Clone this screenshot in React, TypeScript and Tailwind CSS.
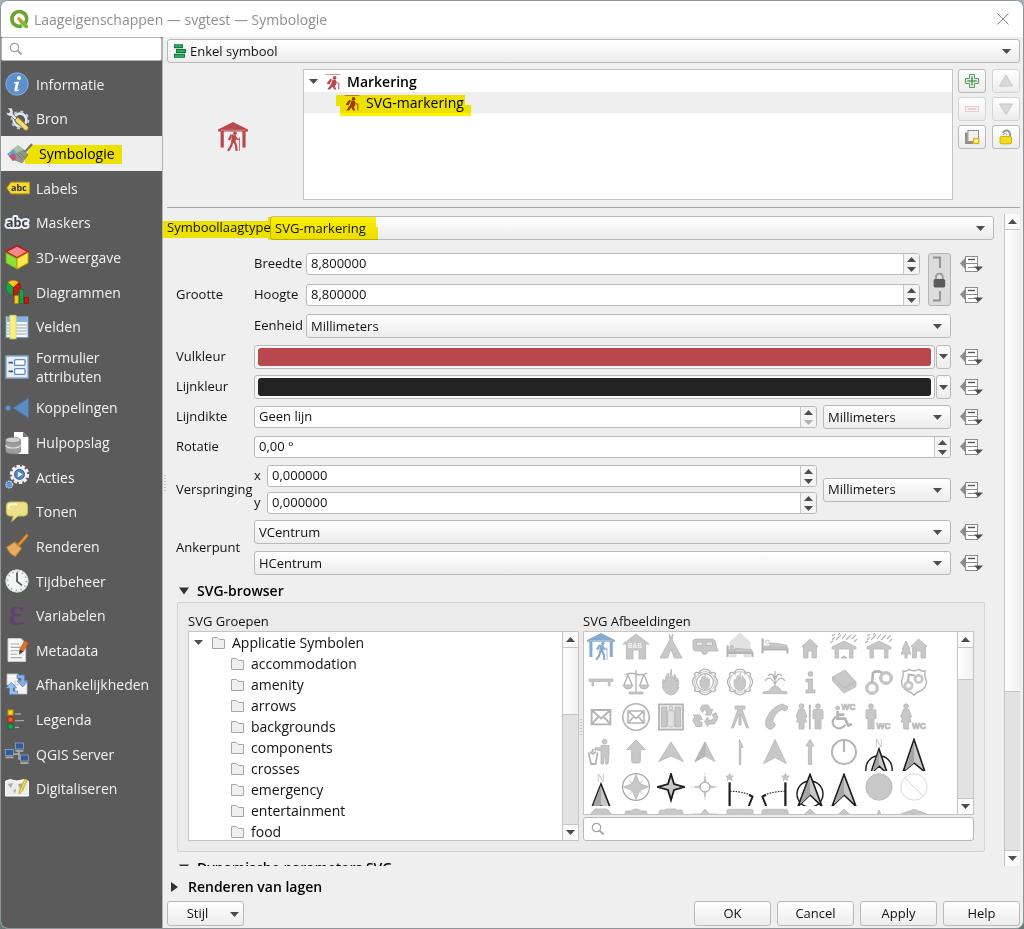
import type { ReactNode } from 'react';
import clsx from 'clsx';

const FILL = '#c8c8c8';
const LINE = '#b4b4b4';

/* ---------- shared bits ---------- */

function Arrow({ up = false, faded = false, className = '' }: { up?: boolean; faded?: boolean; className?: string }) {
  return (
    <svg viewBox="0 0 9 5" className={clsx('w-[9px] h-[5px] shrink-0', className)} aria-hidden="true">
      <path d={up ? 'M0 5L4.5 0L9 5Z' : 'M0 0H9L4.5 5Z'} fill={faded ? '#b0b0b0' : '#4d4d4d'} />
    </svg>
  );
}

function Search() {
  return (
    <svg viewBox="0 0 14 14" className="w-[14px] h-[14px]" fill="none" stroke="#a4a4a4" aria-hidden="true">
      <circle cx="5.5" cy="5.5" r="4.2" strokeWidth="1.2" />
      <path d="M8.6 8.6L12.5 12.5" strokeWidth="1.8" />
    </svg>
  );
}

function Grip({ className }: { className: string }) {
  return (
    <svg viewBox="0 0 2 16" className={clsx('w-[2px] h-4 pointer-events-none', className)} aria-hidden="true">
      <path d="M1 0V16" stroke="#c2c2c2" strokeWidth="2" strokeDasharray="1 2" />
    </svg>
  );
}

const boxed = 'border border-[#b9b9b9] rounded-[3px]';
const raised = 'bg-linear-to-b from-white to-[#ececec]';

function Select({ id, label, options, className = '', indent = 'pl-1' }: {
  id: string;
  label?: string;
  options: string[];
  className?: string;
  indent?: string;
}) {
  return (
    <div className={clsx('relative h-6', className)}>
      <select id={id} aria-label={label} className={clsx('block w-full h-full pt-px appearance-none outline-none', boxed, raised, indent)}>
        {options.map((o) => (
          <option key={o}>{o}</option>
        ))}
      </select>
      <Arrow className="absolute right-[9px] top-[10px] pointer-events-none" />
    </div>
  );
}

function Spin({ id, label, value, className = '', min = false }: {
  id: string;
  label?: string;
  value: string;
  className?: string;
  min?: boolean;
}) {
  return (
    <div className={clsx('flex h-[22px] bg-white overflow-hidden', boxed, className)}>
      <input id={id} aria-label={label} defaultValue={value} className="flex-1 min-w-0 px-1 outline-none bg-transparent" />
      <div className="w-4 shrink-0 border-l border-[#c6c6c6] bg-[#f4f4f4] flex flex-col">
        <button aria-label="Omhoog" className="flex-1 flex items-center justify-center"><Arrow up /></button>
        <button aria-label="Omlaag" className="flex-1 flex items-center justify-center"><Arrow faded={min} /></button>
      </div>
    </div>
  );
}

function Override() {
  return (
    <button aria-label="Data-gedefinieerde override" className="w-[24px] h-[18px] shrink-0">
      <svg viewBox="0 0 24 18" className="w-[24px] h-[18px]">
        <path d="M0 8.5L5 3V14Z" fill="#8c8c8c" />
        <rect x="5.5" y="1.5" width="12" height="15" fill="#fff" stroke="#8c8c8c" />
        <path d="M5 8.5H18M8 12.5H15" stroke="#8c8c8c" />
        <path d="M8 4.5H15" stroke="#555" strokeWidth="1.4" />
        <path d="M14 11.6H23L18.5 16Z" fill="#4d4d4d" />
      </svg>
    </button>
  );
}

function Scrollbar({ thumb }: { thumb: string }) {
  return (
    <div className="w-4 shrink-0 flex flex-col border-l border-[#c4c4c4] bg-[#e2e2e2]">
      <button aria-label="Omhoog schuiven" className="h-4 shrink-0 bg-[#fafafa] border-b border-[#c4c4c4] flex items-center justify-center"><Arrow up /></button>
      <div className={clsx('bg-linear-to-r from-white to-[#f0f0f0] border-b border-[#c4c4c4]', thumb)} />
      <div className="flex-1" />
      <button aria-label="Omlaag schuiven" className="h-4 shrink-0 bg-[#fafafa] border-t border-[#c4c4c4] flex items-center justify-center"><Arrow /></button>
    </div>
  );
}

function Hiker({ color }: { color: string }) {
  return (
    <g fill={color} stroke={color}>
      <circle cx="17" cy="11.2" r="1.8" stroke="none" />
      <path d="M14 12.8L17.4 13.4L18 17.5L15.8 20.4L13.6 19.8Z" strokeWidth="0.6" />
      <path d="M12.8 12L9.8 17.4L12.2 18.4L14 13Z" stroke="none" />
      <path d="M14.8 19L13 24.2L10 28.8M16.2 19L18 23.4L18.6 28.8" fill="none" strokeWidth="2.2" />
      <path d="M17 14L19 17L21.4 17.6" fill="none" strokeWidth="1.4" />
      <path d="M21.4 15.5V28.8" fill="none" strokeWidth="0.8" />
    </g>
  );
}

function Shelter({ color, className }: { color: string; className: string }) {
  return (
    <svg viewBox="0 0 30 30" className={className} aria-hidden="true">
      <path d="M0 7.4L15 0L30 7.4V9.4H27.6V25.6H24.4V9.4H5.8V25.6H2.6V9.4H0Z" fill={color} />
      <path d="M3 8.2H27" stroke="#fff" strokeWidth="0.7" opacity="0.5" />
      <Hiker color={color} />
    </svg>
  );
}

function TinyHiker({ color }: { color: string }) {
  return (
    <svg viewBox="0 0 16 16" className="w-4 h-4 shrink-0" aria-hidden="true">
      <path d="M0.6 0.6H15.4" stroke={color} strokeWidth="0.8" opacity="0.8" />
      <circle cx="9.6" cy="3.8" r="1.9" fill={color} />
      <path d="M7.4 5.4L11 6.2L11.4 10.4L9.8 12L11.4 15.6H9L7.6 12.6L4.8 15.6H2.2L6.2 10Z" fill={color} />
      <path d="M5.2 4.8L1.6 9.4L4.4 10.6L7 5.8Z" fill={color} />
      <path d="M10.6 7.2L13 9.4M13.8 8.6V15.4" stroke={color} fill="none" />
    </svg>
  );
}

/* ---------- sidebar ---------- */

const pages: { name: string; icon: ReactNode }[] = [
  {
    name: 'Informatie',
    icon: (
      <>
        <circle cx="12" cy="12" r="11.2" fill="#5d8fcf" stroke="#86b0e2" />
        <circle cx="14" cy="6" r="2" fill="#fff" />
        <path d="M9 10.2L14.2 9.4L12.2 17.2Q12.2 18.4 14.4 17L14 18.6Q9 21 9.4 17.6L10.8 11.4H9Z" fill="#fff" />
      </>
    ),
  },
  {
    name: 'Bron',
    icon: (
      <>
        <circle cx="15" cy="13" r="6.4" fill="none" stroke="#dfe6ee" strokeWidth="2.6" />
        <circle cx="15" cy="13" r="8.4" fill="none" stroke="#b7cbe2" strokeWidth="2" strokeDasharray="3 3.6" />
        <path d="M12 12.6L21 21" stroke="#8f7617" strokeWidth="5.6" strokeLinecap="round" />
        <path d="M12.4 13L21 21" stroke="#f2dc7a" strokeWidth="3.8" strokeLinecap="round" />
        <path d="M2 1L7 1Q9 4 8 7L12 11L10 13L6 9Q2 10 1 5L4 6L5 4Z" fill="#e8e8e8" stroke="#444" strokeWidth="0.6" />
      </>
    ),
  },
  {
    name: 'Symbologie',
    icon: (
      <>
        <path d="M5 9L13 3L21 9L12 15Z" fill="#a3c7a0" />
        <path d="M2 12L9 7L13 14L8 19Z" fill="#6aa2cf" />
        <path d="M4 14L9 11L11 18L8 19Z" fill="#c8526c" />
        <path d="M11 12L19 8L23 13L17 21L10 18Z" fill="#96968a" stroke="#79756a" strokeWidth="0.6" />
        <path d="M13 13L18 18M15 11L20 16" stroke="#6f7f80" />
        <path d="M20 10L27 2" stroke="#777" strokeWidth="2.2" />
      </>
    ),
  },
  {
    name: 'Labels',
    icon: (
      <>
        <path d="M1.8 12L6 6.2H24.4V17.8H6Z" fill="#f4d73a" stroke="#c9a400" />
        <text x="6" y="15.4" fontSize="9" fontWeight="700" fontFamily="Noto Sans" fill="#333">abc</text>
      </>
    ),
  },
  {
    name: 'Maskers',
    icon: (
      <text x="1" y="16" fontSize="12.5" fontWeight="700" fontFamily="Noto Sans" fill="#3d3d44" stroke="#eef1fb" strokeWidth="4" strokeLinejoin="round" paintOrder="stroke">abc</text>
    ),
  },
  {
    name: '3D-weergave',
    icon: (
      <>
        <path d="M12 0.8L23 6.6L12 13L1 6.6Z" fill="#f28a8a" stroke="#c4141c" strokeWidth="1.6" />
        <path d="M1 7.6L12 13.6V24L1 18Z" fill="#8fe03a" stroke="#5ba61c" />
        <path d="M23 7.6L12 13.6V24L23 18Z" fill="#f8e64a" stroke="#c6a800" />
      </>
    ),
  },
  {
    name: 'Diagrammen',
    icon: (
      <>
        <path d="M8.4 7.6L2.6 2.6Q8 -2 14 2.6Z" fill="#fbc520" stroke="#a87c00" strokeWidth="0.6" />
        <path d="M8.4 7.6L2.6 2.6Q-1.6 8 3.4 13L8.4 15.4Z" fill="#1da14c" stroke="#0b6d2c" strokeWidth="0.6" />
        <path d="M8.4 7.6L14 2.6Q18 9 13 13.4L8.4 15.4Z" fill="#c61a12" stroke="#7d0d08" strokeWidth="0.6" />
        <rect x="9.6" y="15.6" width="4" height="8" fill="#fbc520" stroke="#a87c00" strokeWidth="0.6" />
        <rect x="14.4" y="9.6" width="4" height="14" fill="#1da14c" stroke="#0b6d2c" strokeWidth="0.6" />
        <rect x="19.2" y="17.6" width="4" height="6" fill="#c61a12" stroke="#7d0d08" strokeWidth="0.6" />
      </>
    ),
  },
  {
    name: 'Velden',
    icon: (
      <>
        <rect x="1" y="1.6" width="22" height="21" fill="#f3f7fb" stroke="#6f9ac8" />
        <rect x="1.6" y="2" width="21" height="5" fill="#8cb2dc" />
        <path d="M2 10H22M2 13H22M2 16H22M2 19H22" stroke="#9aa6b4" strokeWidth="1.2" />
        <rect x="5" y="0.4" width="6" height="23.4" fill="#f6f08a" stroke="#e0d860" />
      </>
    ),
  },
  {
    name: 'Formulier\nattributen',
    icon: (
      <>
        <rect x="1" y="1" width="22" height="22" fill="#e6edf4" stroke="#86a6cc" strokeWidth="1.4" />
        <path d="M3.6 7.6H8M3.6 16.4H8" stroke="#4b5566" strokeWidth="1.6" />
        <rect x="9.6" y="4.6" width="10.4" height="5.8" rx="1" fill="#fff" stroke="#5d8cc4" strokeWidth="1.3" />
        <rect x="9.6" y="13.6" width="10.4" height="5.8" rx="1" fill="#fff" stroke="#5d8cc4" strokeWidth="1.3" />
      </>
    ),
  },
  {
    name: 'Koppelingen',
    icon: (
      <>
        <circle cx="3" cy="12" r="2.6" fill="#5f8fc6" />
        <path d="M8 12L23.6 2V22Z" fill="#5b8cc4" stroke="#456f9f" strokeWidth="0.6" />
      </>
    ),
  },
  {
    name: 'Hulpopslag',
    icon: (
      <>
        <path d="M9 1H18L23.4 6V23H9Z" fill="#fff" />
        <path d="M18 1V6H23.4Z" fill="#777" />
        <path d="M0.6 9V20Q1 23 8 23T15.6 20V9Z" fill="#9d9d9d" stroke="#6f6f6f" strokeWidth="0.6" />
        <ellipse cx="8.1" cy="9" rx="7.5" ry="2.8" fill="#cfcfcf" stroke="#6f6f6f" strokeWidth="0.6" />
        <path d="M0.6 14.4Q2 17 8 17T15.6 14.4" fill="none" stroke="#e0e0e0" strokeWidth="1.2" />
      </>
    ),
  },
  {
    name: 'Acties',
    icon: (
      <>
        <circle cx="14.5" cy="9.4" r="8.4" fill="none" stroke="#f0f0f0" strokeWidth="2.6" strokeDasharray="3.4 1.8" />
        <circle cx="14.5" cy="9.4" r="7.8" fill="#f0f0f0" />
        <circle cx="14.5" cy="9.4" r="5" fill="#4d86c4" stroke="#34659c" />
        <path d="M12.8 6.6L17.8 9.4L12.8 12.2Z" fill="#fff" />
        <circle cx="4.2" cy="19.6" r="3.4" fill="#5f93cf" stroke="#c4d4e6" strokeWidth="1.2" strokeDasharray="1.6 0.8" />
      </>
    ),
  },
  {
    name: 'Tonen',
    icon: (
      <>
        <path d="M5 2H19Q22.6 2 22.6 6V12Q22.6 16 19 16H13L6.6 21.6L8.4 16H5Q1.4 16 1.4 12V6Q1.4 2 5 2Z" fill="#ece08a" stroke="#cbbd4f" />
        <path d="M3.6 9V6.6Q3.6 4.4 6 4.4H12" stroke="#fdfbe4" strokeWidth="1.6" fill="none" />
      </>
    ),
  },
  {
    name: 'Renderen',
    icon: (
      <>
        <path d="M14 10.6L21.8 1.6" stroke="#b06f16" strokeWidth="3.4" strokeLinecap="round" />
        <path d="M14 10.6L21.8 1.6" stroke="#e8962e" strokeWidth="2" strokeLinecap="round" />
        <path d="M9.6 8L16.6 14.6L10.4 22.6Q4 20 1.6 13.2Z" fill="#e6ab62" stroke="#b5782b" />
        <path d="M10 8L16.4 14" stroke="#b5782b" strokeWidth="1.6" />
      </>
    ),
  },
  {
    name: 'Tijdbeheer',
    icon: (
      <>
        <circle cx="12" cy="12" r="11.2" fill="#f5f5f3" stroke="#d6d6d6" />
        <circle cx="12" cy="12" r="9.4" fill="none" stroke="#7fa3cc" strokeWidth="1.6" strokeDasharray="1.2 3.72" />
        <path d="M12 3.4V12.4L17 16.4" fill="none" stroke="#555" strokeWidth="1.8" />
      </>
    ),
  },
  {
    name: 'Variabelen',
    icon: <text x="3.4" y="20.8" fontSize="38" fontFamily="Liberation Serif" fill="#67406f" stroke="#67406f" strokeWidth="0.7">ε</text>,
  },
  {
    name: 'Metadata',
    icon: (
      <>
        <path d="M3 0.6H16L20.6 5V23.4H3Z" fill="#f7f7f7" stroke="#cfcfcf" />
        <path d="M5.6 6H14M5.6 9.4H16M5.6 12.8H14M5.6 16.2H12M5.6 19.6H17" stroke="#a9a9a9" strokeWidth="1.1" />
        <path d="M14.6 11.6L19.6 2.8L23.4 4.8L18.4 13.6Z" fill="#e4702c" stroke="#b34a12" strokeWidth="0.6" />
        <path d="M14.6 11.6L18.4 13.6L14 16.8Z" fill="#3a3a3a" />
      </>
    ),
  },
  {
    name: 'Afhankelijkheden',
    icon: (
      <>
        <path d="M2 1H13V12H2ZM10 8H22V21H10Z" fill="#f4f4f4" stroke="#c4c4c4" strokeWidth="0.8" />
        <path d="M12 2H19.6V8.4H23L17.6 14L12.6 8.4H16V5.4H12Z" fill="#86aee6" stroke="#4f7fc0" strokeWidth="0.7" />
        <path d="M12.6 21.4H4.4V15H1L6.4 9.4L11.6 15H8.2V18H12.6Z" fill="#9ac0f0" stroke="#4f7fc0" strokeWidth="0.7" />
      </>
    ),
  },
  {
    name: 'Legenda',
    icon: (
      <>
        <rect x="3" y="2" width="5" height="5" fill="#fcd32a" stroke="#c79500" />
        <rect x="3" y="9" width="5" height="5" fill="#f05a28" stroke="#b42208" />
        <rect x="3" y="16" width="5" height="5" fill="#22a455" stroke="#0b6d2c" />
        <path d="M10 6H16M10 12.6H19M10 19.4H14" stroke="#a6a6a6" strokeWidth="1.4" />
      </>
    ),
  },
  {
    name: 'QGIS Server',
    icon: (
      <>
        <path d="M8 12H14V17H17M14 12V8" stroke="#b9b9b9" strokeWidth="1.4" fill="none" />
        {[[10.4, 1], [0.4, 7.4], [15.4, 13]].map(([x, y]) => (
          <g key={x}>
            <rect x={x} y={y} width="8" height="6" fill="#2e5c9c" stroke="#9aa7b6" strokeWidth="0.8" />
            <path d={`M${x} ${y + 8}H${x + 8}`} stroke="#a8a8a8" strokeWidth="1.8" />
          </g>
        ))}
      </>
    ),
  },
  {
    name: 'Digitaliseren',
    icon: (
      <>
        <path d="M0.6 4L5 2.6L12 4L19 2.6L23.4 4V19H0.6Z" fill="#ececea" stroke="#fff" />
        <path d="M3 7L8 6L6 11L4 9ZM8 13L11 12L10 17ZM13 7L20 6L18 14L15 12Z" fill="#a9a9a4" />
        <path d="M14.4 13.6L20 2L22.4 3L17 14.4L14 17Z" fill="#ecdf4c" stroke="#a89c1c" strokeWidth="0.7" />
      </>
    ),
  },
];

function Sidebar() {
  return (
    <aside className="w-[162px] shrink-0 flex flex-col bg-[#5b5b5b] border-r border-[#b4b4b4]">
      <label className="h-6 shrink-0 flex items-center gap-1 px-[7px] bg-white border border-[#b4b4b4] rounded-[2px]">
        <Search />
        <input aria-label="Zoeken" className="flex-1 min-w-0 outline-none" />
      </label>
      <nav className="flex-1 flex flex-col pt-[6px] pb-[122px] text-[14px]">
        {pages.map((p) => {
          const active = p.name === 'Symbologie';
          const tall = p.name.includes('\n');
          return (
            <a
              key={p.name}
              href="#"
              className={clsx(
                'relative grow flex items-center gap-[7px] pl-1 whitespace-pre-line',
                tall ? 'basis-[46px] leading-[19px]' : 'basis-[34px]',
                active ? 'bg-[#efefef] text-black' : 'text-[#f2f2f2]',
              )}
            >
              <svg viewBox="0 0 24 24" className="w-6 h-6 shrink-0 overflow-visible" aria-hidden="true">{p.icon}</svg>
              <span className={active ? 'pl-[3px]' : ''}>{p.name}</span>
              {active && (
                <svg viewBox="0 0 97 19" className="absolute left-6 top-[9px] w-[97px] h-[19px] mix-blend-multiply" aria-hidden="true">
                  <path d="M6 0H97V19H0V14Z" fill="#fdf000" />
                </svg>
              )}
            </a>
          );
        })}
      </nav>
    </aside>
  );
}

/* ---------- symbol tree ---------- */

const toolGlyphs: { label: string; off?: boolean; art: ReactNode }[] = [
  {
    label: 'Toevoegen',
    art: (
      <>
        <path d="M5.5 1.5H10.5V5.5H14.5V10.5H10.5V14.5H5.5V10.5H1.5V5.5H5.5Z" fill="#e2f0e2" stroke="#5c9a62" />
        <path d="M8 3.4V12.6M3.4 8H12.6" stroke="#5c9a62" strokeWidth="1.6" />
      </>
    ),
  },
  { label: 'Omhoog', off: true, art: <path d="M8 2L14.5 13H1.5Z" fill="#d6dadb" stroke="#c2c6c8" /> },
  {
    label: 'Verwijderen',
    off: true,
    art: (
      <>
        <rect x="1.5" y="5.5" width="13" height="5" fill="#faf1f1" stroke="#e3cfcf" />
        <path d="M3.5 8H12.5" stroke="#dfc3c3" strokeWidth="1.4" />
      </>
    ),
  },
  { label: 'Omlaag', off: true, art: <path d="M1.5 3H14.5L8 13.5Z" fill="#d6dadb" stroke="#c2c6c8" /> },
  {
    label: 'Dupliceren',
    art: (
      <>
        <path d="M1 3.6H3.6V13H13V15H1Z" fill="#8f8f86" />
        <rect x="3.9" y="1.5" width="10.6" height="11" fill="#f1f1f1" stroke="#8f8f86" />
        <rect x="9.6" y="9.6" width="5" height="4.8" fill="#fdf3b0" stroke="#dcb416" strokeWidth="1.4" />
      </>
    ),
  },
  {
    label: 'Ontgrendelen',
    art: (
      <>
        <path d="M5 4Q6 1.4 9 1.6Q12.4 2 12 7.4" fill="none" stroke="#989898" strokeWidth="2" />
        <path d="M5.2 5.6Q8 3 9.2 6" fill="none" stroke="#989898" />
        <rect x="2" y="7.4" width="11.6" height="7.4" rx="1.6" fill="#f1dd1e" stroke="#c9a90a" />
      </>
    ),
  },
];

function SymbolHeader() {
  return (
    <section className="flex pl-1 pr-[3px] pt-[6px] shrink-0">
      <div className="w-[136px] h-[131px] shrink-0 flex items-center justify-center pt-1 pr-1">
        <Shelter color="#b8484b" className="w-[30px] h-[30px]" />
      </div>
      <ul className="relative flex-1 bg-white border border-[#c4c4c4] text-black text-[14px]">
        <li className="h-[22px] flex items-center pt-px pl-[5px] font-semibold">
          <Arrow />
          <span className="pl-[7px] pr-[6px]"><TinyHiker color="#b8484b" /></span>
          Markering
        </li>
        <li className="h-[21px] flex items-center pl-[40px] bg-[#efefef]">
          <span className="pr-[6px]"><TinyHiker color="#a03c50" /></span>
          SVG-markering
        </li>
        <svg viewBox="0 0 136 22" className="absolute left-8 top-6 w-[136px] h-[22px] mix-blend-multiply" aria-hidden="true">
          <path d="M0 1H129V11H135V22H4V12H0Z" fill="#fdf000" />
        </svg>
      </ul>
      <div className="grid grid-cols-2 auto-rows-[24px] gap-x-[6px] gap-y-1 pl-[5px] content-start">
        {toolGlyphs.map((g) => (
          <button
            key={g.label}
            aria-label={g.label}
            disabled={g.off}
            className={clsx('w-7 flex items-center justify-center rounded-[3px] border', raised, g.off ? 'border-[#d4d4d4]' : 'border-[#b9b9b9]')}
          >
            <svg viewBox="0 0 16 16" className="w-4 h-4">{g.art}</svg>
          </button>
        ))}
      </div>
    </section>
  );
}

/* ---------- layer form ---------- */

const line = 'flex items-center';

function Row({ label, id, tall = false, end, children }: { label: string; id?: string; tall?: boolean; end?: ReactNode; children: ReactNode }) {
  return (
    <div className={clsx(line, tall ? 'min-h-[25px]' : 'min-h-6')}>
      <label htmlFor={id} className="w-[78px] shrink-0">{label}</label>
      <div className="flex-1 min-w-0">{children}</div>
      <div className="w-[43px] shrink-0 pl-[9px] flex">{end}</div>
    </div>
  );
}

function ColorButton({ id, swatch, label }: { id: string; swatch: string; label: string }) {
  return (
    <div className="flex gap-px h-6">
      <button id={id} aria-label={label} className={clsx('flex-1 py-[2px] px-[3px]', boxed, 'bg-[#f8f8f8]')}>
        <span className={clsx('block h-full rounded-[3px]', swatch)} />
      </button>
      <button aria-label={`${label} opties`} className={clsx('w-[15px] flex items-center justify-center', boxed, raised)}>
        <Arrow />
      </button>
    </div>
  );
}

const units = ['Millimeters', 'Punten', 'Pixels', 'Inches'];

function LayerForm() {
  return (
    <div className="flex flex-col gap-[6px] pl-[13px]">
      <div className="flex items-center">
        <span className="w-[78px] shrink-0">Grootte</span>
        <div className="flex-1 flex flex-col gap-[7px]">
          <div className="flex">
            <div className="flex-1 flex flex-col gap-[7px]">
              <div className={clsx(line, 'h-6')}>
                <label htmlFor="w" className="w-[52px]">Breedte</label>
                <Spin id="w" value="8,800000" className="flex-1" />
              </div>
              <div className={clsx(line, 'h-6')}>
                <label htmlFor="h" className="w-[52px]">Hoogte</label>
                <Spin id="h" value="8,800000" className="flex-1" />
              </div>
            </div>
            <button aria-label="Verhouding vergrendelen" className="ml-2 my-[1px] w-[23px] rounded-[3px] border border-[#b4b4b4] bg-[#dcdcdc]">
              <svg viewBox="0 0 21 51" className="w-[21px] h-[51px]">
                <path d="M4 3.5H11V14M4 46.5H11V37" fill="none" stroke="#8f8f8f" strokeWidth="1.8" />
                <path d="M7 26V23Q7 19.6 10.4 19.6T13.8 23V26" fill="none" stroke="#9a9a9a" strokeWidth="1.8" />
                <rect x="4.6" y="25" width="11.6" height="8.4" rx="1.6" fill="#5a5a5a" />
              </svg>
            </button>
            <div className="w-[43px] pl-[9px] flex flex-col gap-[7px]">
              <div className={clsx(line, 'h-6')}><Override /></div>
              <div className={clsx(line, 'h-6')}><Override /></div>
            </div>
          </div>
          <div className={clsx(line, 'pr-[43px]')}>
            <label htmlFor="unit" className="w-[52px]">Eenheid</label>
            <Select id="unit" options={units} className="flex-1" />
          </div>
        </div>
      </div>

      <Row label="Vulkleur" id="fill" tall end={<Override />}>
        <ColorButton id="fill" label="Vulkleur" swatch="bg-[#b8484b]" />
      </Row>
      <Row label="Lijnkleur" id="stroke" end={<Override />}>
        <ColorButton id="stroke" label="Lijnkleur" swatch="bg-[#232323]" />
      </Row>
      <Row label="Lijndikte" id="sw" end={<Override />}>
        <div className="flex items-center gap-[6px]">
          <Spin id="sw" value="Geen lijn" className="flex-1" min />
          <Select id="swu" label="Eenheid lijndikte" options={units} className="w-32" />
        </div>
      </Row>
      <Row label="Rotatie" id="rot" end={<Override />}>
        <Spin id="rot" value="0,00 °" />
      </Row>
      <Row label="Verspringing" id="ox" end={<Override />}>
        <div className="flex items-center gap-[6px]">
          <div className="flex-1 flex flex-col gap-[5px]">
            <div className={line}>
              <label htmlFor="ox" className="w-[13px]">x</label>
              <Spin id="ox" value="0,000000" className="flex-1" />
            </div>
            <div className={line}>
              <label htmlFor="oy" className="w-[13px]">y</label>
              <Spin id="oy" value="0,000000" className="flex-1" />
            </div>
          </div>
          <Select id="ou" label="Eenheid verspringing" options={units} className="w-32" />
        </div>
      </Row>
      <Row
        label="Ankerpunt"
        id="av"
        end={
          <div className="flex flex-col gap-[13px]">
            <Override />
            <Override />
          </div>
        }
      >
        <div className="flex flex-col gap-[7px]">
          <Select id="av" options={['VCentrum', 'Boven', 'Onder']} />
          <Select id="ah" label="Horizontaal ankerpunt" options={['HCentrum', 'Links', 'Rechts']} />
        </div>
      </Row>
    </div>
  );
}

/* ---------- SVG gallery ---------- */

const wc = (x: number, y: number) => (
  <text x={x} y={y} fontSize="8.4" fontWeight="700" fontFamily="Liberation Sans" fill={FILL} stroke={LINE} strokeWidth="0.7">WC</text>
);
const rain = <path d="M2 7L5 4M6 7L11 2M12 6L16 1M16 7L21 2M22 6L26 2M24 9L27 6M2 3L5 1M0 10L3 8M8 2L10 0" stroke={LINE} strokeWidth="1.1" />;
const man = (x: number) => (
  <g transform={`translate(${x} 0)`}>
    <circle cx="5" cy="3.2" r="2.4" />
    <path d="M1.6 6.4H8.4Q10 6.4 10 8V15.4H8V26H5.6V17H4.4V26H2V15.4H0V8Q0 6.4 1.6 6.4Z" />
  </g>
);
const woman = (x: number) => (
  <g transform={`translate(${x} 0)`}>
    <circle cx="5.5" cy="3.2" r="2.4" />
    <path d="M2.8 6.4H8.2L11 14L9.2 15L10.4 19H8V26H3V19H0.6L1.8 15L0 14Z" />
  </g>
);
const flame = 'M14.4 1Q12.6 5 13.4 9.6Q11 9 11.4 5Q7 9 8.4 14L6.4 11Q4.4 15 6.6 20L5.4 19Q8 26.4 14 27Q20 26 22 19L20.6 20Q23 14 20.6 10L19.4 14Q20 9 17.4 6L17 11Q13.6 7 14.4 1Z';
const maltese = (
  <>
    <path d="M8.6 3.4Q14 -1 19.4 3.4L19 5.4Q23 3 24.6 6Q23 8 25 9.6Q28 14 25 18.4Q23 20 24.6 22Q22 25 19 22.6L19.4 24.6Q14 29 8.6 24.6L9 22.6Q6 25 3.4 22Q5 20 3 18.4Q0 14 3 9.6Q5 8 3.4 6Q5 3 9 5.4Z" fill="none" strokeWidth="1.3" />
    <circle cx="14" cy="14" r="10.4" fill="none" />
  </>
);
const star4 = 'M14 0L16.6 11.4L28 14L16.6 16.6L14 28L11.4 16.6L0 14L11.4 11.4Z';
const dark = { stroke: '#1c1c1c', strokeWidth: 1.6 };
const swing = (mirror: boolean) => (
  <g transform={mirror ? 'translate(28 0) scale(-1 1)' : undefined}>
    <path d="M3.6 0.4L4.6 3H7.4L5.2 4.8L6 7.6L3.6 6L1.2 7.6L2 4.8L-0.2 3H2.6Z" />
    <path d="M3.6 9.4V34" {...dark} strokeWidth="2.2" />
    <path d="M4 18.4Q15 18 26 22.6" fill="none" stroke="#333" strokeWidth="1.2" strokeDasharray="1.6 1.2" />
    <path d="M23 22L27 23.6M26.8 23L22.8 33" {...dark} strokeWidth="2" />
  </g>
);
const hollow = { fill: 'none', strokeWidth: 1.4 };

// one per cell, drawn in a 28 x 34 box; the first cell holds the coloured shelter
const cells: ReactNode[] = [
  null,
  <><path d="M14 1L27 11H23.6V26H17V17H11V26H4.4V11H1Z" /><text x="6" y="15.4" fontSize="6.4" fontWeight="700" fontFamily="Liberation Sans" fill="#f4f4f4" stroke="none">B&amp;B</text></>,
  <path d="M12 1L14 5L16 1L15.2 7L25 25H17.4L14 16L10.6 25H3L12.8 7Z" />,
  <><path d="M5 6H22Q25 7 25.6 16H27V18H17Q16 21.6 13.6 21.6T10.4 18H4Q2 18 2 14V9Q2 6 5 6Z" /><path d="M5.6 9H11.6V12.6H5.6ZM15 9H21.6V12.6H15Z" fill="#e6e6e6" /><circle cx="13.6" cy="18.6" r="1.2" fill="#e6e6e6" /></>,
  <><path d="M14 0L24 9V24H18V16H10V24H4V9Z" fill="#e2e2e2" stroke="#dcdcdc" /><path d="M1.6 12.6V24M1.6 20H26.4V24" fill="none" strokeWidth="2.2" /><path d="M9 18V15.6H12L25 16.6Q26.6 17 26.4 18.6H3V16.6H9Z" /><circle cx="5.6" cy="14" r="1.7" /></>,
  <><path d="M1.6 5.6V20.4M1.6 16.4H26.4V20.4" fill="none" strokeWidth="2.2" /><path d="M9 14V10H12L25 12Q26.6 12.4 26.4 15H3V13H9Z" /><circle cx="6.4" cy="9" r="1.9" fill="none" /></>,
  <path d="M14 6L22 13.4H20.4V25H16V18H12V25H7.6V13.4H6Z" />,
  <>{rain}<path d="M14 8L26 14V16H23V25H19.6V16H8.4V25H5V16H2V14Z" /><path d="M11 25Q14 21 17 25Z" /></>,
  <>{rain}<path d="M14 8L26 14V16H23V25H19.6V16H8.4V25H5V16H2V14Z" /></>,
  <><path d="M6 8L10 16H8.6L11 21H7V25H5V21H1L3.4 16H2Z" /><path d="M18.6 6L27 13.4H25.4V25H21V18H16.4V25H12.6V13.4H11Z" /></>,

  <path d="M2 11H26V13.4H23V18H21.4V13.4H6.6V18H5V13.4H2Z" />,
  <><path d="M14 2V24M3 7Q8 4 14 6Q20 8 25 5M6 7L2 17M6 7L10 17M22 6L18 17M22 6L26 17" {...hollow} /><path d="M1 17H11Q10 21 6 21T1 17ZM17 17H27Q26 21 22 21T17 17ZM7 24H21V26H7Z" /></>,
  <path d={flame} />,
  <>{maltese}<path d={flame} transform="translate(5.2 4.6) scale(.63)" /><circle cx="14" cy="14" r="8.4" fill="none" strokeWidth="1.2" /></>,
  <>{maltese}<path d={flame} transform="translate(4 3.4) scale(.72)" /></>,
  <><path d="M14 22V3M14 12Q12 3 7 8M14 12Q16 3 21 8M14 16Q8 6 4 13M14 16Q20 6 24 13M14 12L12 8M14 12L16 8" {...hollow} strokeWidth="1.2" /><path d="M8 23Q10 18 14 18T20 23L26 24V25.6H2V24Z" /></>,
  <><circle cx="14.4" cy="6" r="2.4" /><path d="M10 11H16.4V22H19V25H10V22H12.4V14H10Z" /></>,
  <><path d="M2.6 9L15 2L26 14L14 20Z" /><path d="M2.6 9V13L14 25L26 18.6V14L14 20Z" /></>,
  <><circle cx="7" cy="20" r="5" fill="none" stroke={FILL} strokeWidth="3" /><circle cx="21" cy="10" r="5" fill="none" stroke={FILL} strokeWidth="3" /><circle cx="7" cy="20" r="6.4" fill="none" /><circle cx="21" cy="10" r="6.4" fill="none" /><path d="M7 14.6L8 5Q11 2 17 4.6" fill="none" strokeWidth="2.6" /></>,
  <><path d="M3 3Q6 4 9 1.4Q14 4 19 1.4Q22 4 25 3Q24 8 26.4 13Q27 20 20 23Q16 24.6 14 27.4Q12 24.6 8 23Q1 20 1.6 13Q4 8 3 3Z" {...hollow} /><circle cx="8.6" cy="17.6" r="3.6" fill="none" stroke={FILL} strokeWidth="2.8" /><circle cx="18.6" cy="11" r="3.6" fill="none" stroke={FILL} strokeWidth="2.8" /><path d="M8 13.6L8.8 6.6L14.8 7.4" fill="none" strokeWidth="2" /></>,

  <path d="M4.6 7H23.4V21.4H4.6ZM4.6 7L14 15.4L23.4 7M4.6 21.4L11.6 13.4M23.4 21.4L16.4 13.4" fill="none" strokeWidth="1.9" />,
  <><circle cx="14" cy="14" r="13.2" fill="none" strokeWidth="1.6" /><path d="M6 8H22V20H6ZM6 8L14 15.4L22 8M6 20L12 13.4M22 20L16 13.4" fill="none" strokeWidth="1.6" /></>,
  <><rect x="2" y="1.4" width="24" height="25.2" fill="#f2f2f2" strokeWidth="1.8" /><path d="M4.4 4H10V24H4.4ZM18 4H23.6V24H18Z" /><rect x="10.6" y="7.6" width="6.8" height="16.4" rx="2" fill="#e0e0e0" /><circle cx="14" cy="5" r="2" fill="#e0e0e0" /></>,
  <><path d="M9 6L11.4 2H17L20 7L22 6L19.6 12H14L16 10L13.6 6L11.6 9.6Z" /><path d="M21 11.6L25 9.6L27 15L23.4 21H17V23.6L13.4 18.6L17 14V17H21L23 14.6Z" /><path d="M2 12H9L11.6 17L9.6 16L8 19H11V23.4H5L1.6 17L4 14Z" /></>,
  <path d="M9 3H19V6H16L22.6 25H20.6L15 11V22H13V11L7.4 25H5.4L12 6H9Z" />,
  <path d="M21 1L26.6 3.4Q27.4 6 24.4 8L20.6 6.4Q13 11 11.6 18.4L14.4 21.6Q13 26 9 26.6Q3 24 5 17Q9 5 21 1Z" />,
  <>{woman(0)}<path d="M13.8 1.6V26" strokeWidth="1.8" />{man(17)}</>,
  <><circle cx="7.6" cy="5" r="2" /><path d="M7.6 8V15.6H15L18.4 22.6L22 21M8 11.6H14.4" fill="none" strokeWidth="2.6" /><path d="M6 13.6Q0.6 18 4 23Q10 28.6 15.6 21.6" fill="none" strokeWidth="2.2" />{wc(11.6, 7.4)}</>,
  <>{man(1)}{wc(11.6, 26)}</>,
  <>{woman(0.6)}{wc(12, 26)}</>,

  <><circle cx="17.6" cy="3.6" r="2.4" /><path d="M14 7.4H22V16L21 26H18.6V18H17.4L16.4 26H14V12.6L8 12V9.8H14Z" /><path d="M1.6 14.6L4 26H8.6L10.6 14.6M3 14L6 16L9 13.6M6.4 11L5 14" fill="none" strokeWidth="1.8" /></>,
  <path d="M14 2L23.4 11.6H18.4V23Q18.4 25 16.4 25H11.6Q9.6 25 9.6 23V11.6H4.6Z" />,
  <path d="M14 4L26.4 23.6L14 18L1.6 23.6Z" />,
  <><path d="M14 4L24 23.6L14 18L4 23.6Z" /><path d="M14 4V18L4 23.6Z" fill="#b8b8b8" /></>,
  <path d="M13.4 1.4L17 9.4H14.8V26.6H13.2Z" />,
  <path d="M14 1.6L25.4 25.6L14 19.6L2.6 25.6Z" />,
  <path d="M14 1.4L18 8H15.6V26.4H12.4V8H10Z" />,
  <><circle cx="14" cy="14" r="12" fill="none" strokeWidth="2" /><path d="M14 2V14" strokeWidth="2.2" /></>,
  <><text x="10" y="9" fontSize="10.5" fontFamily="Liberation Sans" fill={FILL} stroke="none">N</text><circle cx="14" cy="31" r="13.2" fill="none" {...dark} strokeWidth="1.4" /><path d="M14 11L22.6 36L14 28L5.4 36Z" fill="#c8c8c8" {...dark} /><path d="M14 12V28L7 34Z" fill="#a4a4a4" stroke="none" /></>,
  <><path d="M14 1.4L25 34L14 25L3 34Z" {...dark} /><path d="M14 4V25L5 32.4Z" fill="#a4a4a4" stroke="none" /></>,

  <><text x="10" y="9" fontSize="10.5" fontFamily="Liberation Sans" fill={FILL} stroke="none">N</text><path d="M14 11L23.4 35H4.6Z" {...dark} /><path d="M14 12V33L6 33Z" fill="#a4a4a4" stroke="none" /><path d="M11 34Q14 30 17 34Z" fill="#111" /></>,
  <><circle cx="14" cy="14" r="13.4" fill="none" stroke="#a8a8a8" strokeWidth="1.3" /><path d="M5 5L14 11L23 5L17 14L23 23L14 17L5 23L11 14Z" fill="#e4e4e4" stroke="none" /><path d="M14 0L18 10L28 14L18 18L14 28L10 18L0 14L10 10Z" transform="translate(1.4 1.4) scale(.9)" /></>,
  <><path d="M6 6L14 11L22 6L17 14L22 22L14 17L6 22L11 14Z" fill="#eee" stroke="none" /><path d="M14 1L17 11L27 14L17 17L14 27L11 17L1 14L11 11Z" {...dark} strokeWidth="1.8" /></>,
  <><path d="M14 0V28M0 14H28" strokeDasharray="1.4 1.4" /><path d={star4} transform="translate(3.6 3.6) scale(.74)" /><circle cx="14" cy="14" r="4.8" fill="#fff" strokeWidth="1.4" /></>,
  swing(false),
  swing(true),
  <><circle cx="14" cy="21" r="13" fill="none" {...dark} strokeWidth="1.4" /><path d="M14 1.4L26 33.4L14 22L2 33.4Z" {...dark} /><path d="M14 4V22L4 31.6Z" fill="#a4a4a4" stroke="none" /></>,
  <><path d="M14 1.4L26 33.4L14 22L2 33.4Z" {...dark} /><path d="M14 4V22L4 31.6Z" fill="#a4a4a4" stroke="none" /></>,
  <circle cx="14" cy="14" r="13.2" />,
  <><circle cx="14" cy="14" r="13.2" fill="none" stroke="#cfcfcf" /><path d="M5 5L23 23" stroke="#cfcfcf" /></>,

  <path d="M8 1H20L27 9V28H1V9Z" />,
  <path d="M9 3Q14 -1 19 3L24 3L26 8L21 9V28H7V9L2 8L4 3Z" />,
  <path d="M3 2Q8 3 10 1H18Q20 3 25 2L27 8V28H1V8Z" />,
  <path d="M14 1L18 6H26L22 28H6L2 6H10Z" />,
  <rect x="1" y="1.4" width="26" height="26" rx="1.4" />,
  <rect x="1" y="1.4" width="26" height="26" rx="2.4" />,
  <path d="M14 1L28 14L14 28L0 14Z" />,
  <path d="M14 1L28 14L14 28L0 14Z" />,
  <path d="M14 2L26 28H2Z" />,
  <path d="M1 6L14 1.4L27 6V10L14 5.4L1 10Z" />,
];

const groups = ['accommodation', 'amenity', 'arrows', 'backgrounds', 'components', 'crosses', 'emergency', 'entertainment', 'food'];

function Folder() {
  return (
    <svg viewBox="0 0 15 14" className="w-[15px] h-[14px] shrink-0" aria-hidden="true">
      <path d="M1.5 1.5H6.5L8.5 3.5H13.5V12.5H1.5Z" fill="#efefef" stroke="#a6a6a6" />
    </svg>
  );
}

function SvgBrowser() {
  return (
    <div className="ml-[14px] mr-[9px] h-[250px] border border-[#d3d3d3] bg-[#ebebeb] rounded-[2px] pl-[10px] pr-[10px] pt-2 pb-[10px] flex gap-1">
      <div className="relative flex-1 min-w-0 flex flex-col">
        <div className="h-5 leading-5 shrink-0">SVG Groepen</div>
        <div className="flex-1 min-h-0 flex bg-white border border-[#c4c4c4] overflow-hidden">
          <ul className="flex-1 text-[14px]">
            <li className="h-[21px] flex items-center pl-[5px]">
              <Arrow />
              <span className="pl-2 pr-[6px]"><Folder /></span>
              Applicatie Symbolen
            </li>
            {groups.map((g) => (
              <li key={g} className="h-[21px] flex items-center gap-[6px] pl-[41px]">
                <Folder />
                {g}
              </li>
            ))}
          </ul>
          <Scrollbar thumb="h-[67px]" />
        </div>
        <Grip className="absolute -right-[3px] top-[108px]" />
      </div>
      <div className="flex-1 min-w-0 flex flex-col">
        <div className="h-5 leading-5 shrink-0">SVG Afbeeldingen</div>
        <div className="h-[184px] flex bg-white border border-[#c4c4c4] overflow-hidden">
          <div className="flex-1 grid grid-cols-10 auto-rows-[35px] pr-[26px]">
            {cells.map((art, i) => (
              <button key={i} aria-label={`Symbool ${i + 1}`} className="h-[34px] flex justify-center overflow-hidden pt-px">
                {art ? (
                  <svg viewBox="0 0 28 34" className="w-7 h-[34px] shrink-0" fill={FILL} stroke={LINE} strokeWidth="0.8">{art}</svg>
                ) : (
                  <Shelter color="#84abcd" className="w-7 h-7" />
                )}
              </button>
            ))}
          </div>
          <Scrollbar thumb="h-8" />
        </div>
        <label className={clsx('mt-[2px] h-6 flex items-center gap-1 px-[7px] bg-white', boxed)}>
          <Search />
          <input aria-label="Zoek SVG" className="flex-1 min-w-0 outline-none" />
        </label>
      </div>
    </div>
  );
}

/* ---------- window ---------- */

const heading = 'flex items-center text-[14px] leading-5 font-semibold text-black';
const action = 'h-[25px] w-[77px] text-center';

export default function App() {
  return (
    <div className="h-screen bg-linear-to-b from-[#a9b0bb] to-[#5d7c7a] font-['Open_Sans','Noto_Sans',sans-serif] text-[13px] text-[#111]">
      <div className="h-full flex flex-col bg-[#efefef] border border-[#8d9598] rounded-lg overflow-hidden">
        <header className="h-9 shrink-0 flex items-center bg-white pl-2 pr-[14px] text-[#8e8e8e]">
          <svg viewBox="0 0 20 20" className="w-5 h-5" aria-hidden="true">
            <path d="M16 14.6A7.4 7.4 0 1 0 13 16.8" fill="none" stroke="#6aa52c" strokeWidth="3.6" />
            <path d="M10 10.4H13L19 16.4V19H16L10 13Z" fill="#7db83a" />
            <path d="M9.6 7.6L13 10.4L10.6 13L8 10Z" fill="#ee8a2c" />
          </svg>
          <h1 className="flex-1 pl-[5px] text-[14px]">Laageigenschappen — svgtest — Symbologie</h1>
          <button aria-label="Sluiten">
            <svg viewBox="0 0 12 12" className="w-3 h-3"><path d="M0.5 0.5L11.5 11.5M11.5 0.5L0.5 11.5" stroke="#8a8a8a" /></svg>
          </button>
        </header>

        <div className="flex-1 min-h-0 flex">
          <Sidebar />
          <main className="relative flex-1 min-w-0 flex flex-col">
            <Grip className="absolute left-px top-[438px]" />
            <div className="relative ml-1 mr-[3px] mt-[2px] shrink-0">
              <Select id="renderer" label="Type symbool" options={['Enkel symbool', 'Categorieën', 'Gradueel']} indent="pl-[22px]" />
              <svg viewBox="0 0 14 14" className="absolute left-[6px] top-[5px] w-[14px] h-[14px] pointer-events-none" aria-hidden="true">
                <path d="M1 2.2H10M3 7H13M1 11.8H12" stroke="#116b3c" strokeWidth="4" />
                <path d="M1.8 2.2H9.2M3.8 7H12.2M1.8 11.8H11.2" stroke="#1fb25a" strokeWidth="2.2" />
              </svg>
            </div>
            <SymbolHeader />
            <hr className="mt-[7px] ml-1 mr-[3px] border-[#a3a3a3] shrink-0" />

            <div className="mt-[6px] mr-[3px] flex-1 min-h-0 flex">
              <div className="flex-1 min-w-0 overflow-hidden pr-[10px]">
                <div className="relative flex items-center pt-[2px] pl-1">
                  <label htmlFor="type" className="w-[103px] shrink-0">Symboollaagtype</label>
                  <Select id="type" options={['SVG-markering', 'Eenvoudige markering']} className="flex-1" />
                  <svg viewBox="0 0 216 23" className="absolute left-0 top-[3px] w-[216px] h-[23px] mix-blend-multiply pointer-events-none" aria-hidden="true">
                    <path d="M0 4H105V0H213V10H215V23H105V21H0Z" fill="#fdf000" />
                  </svg>
                </div>
                <div className="pt-3">
                  <LayerForm />
                </div>
                <h2 className={clsx(heading, 'h-[27px] gap-2 pl-4 pt-1')}>
                  <svg viewBox="0 0 10 8" className="w-[10px] h-2"><path d="M0 0.5H10L5 7.5Z" fill="#333" /></svg>
                  SVG-browser
                </h2>
                <SvgBrowser />
                <h2 className={clsx(heading, 'gap-2 pl-4 pt-[6px]')}>
                  <svg viewBox="0 0 10 8" className="w-[10px] h-2"><path d="M0 0.5H10L5 7.5Z" fill="#333" /></svg>
                  Dynamische parameters SVG
                </h2>
              </div>
              <Scrollbar thumb="h-[462px]" />
            </div>

            <h2 className={clsx(heading, 'h-[35px] shrink-0 gap-[10px] pl-2 pt-[6px]')}>
              <svg viewBox="0 0 7 10" className="w-[7px] h-[10px]"><path d="M0 0L7 5L0 10Z" fill="#333" /></svg>
              Renderen van lagen
            </h2>
            <footer className="shrink-0 flex items-center gap-[6px] pl-1 pr-[3px] pb-[2px]">
              <button className={clsx(action, boxed, raised, 'relative mr-auto pr-4')}>
                Stijl
                <Arrow className="absolute right-1 top-[10px]" />
              </button>
              {['OK', 'Cancel', 'Apply', 'Help'].map((b) => (
                <button key={b} className={clsx(action, boxed, raised)}>{b}</button>
              ))}
            </footer>
          </main>
        </div>
      </div>
    </div>
  );
}
